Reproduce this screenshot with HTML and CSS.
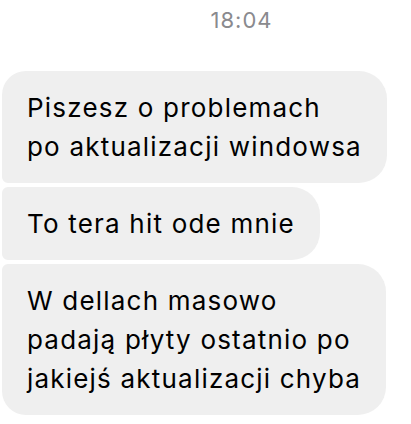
FILE: index.html
```html
<!DOCTYPE html>
<html lang="pl">
<head>
    <meta charset="UTF-8">
    <meta name="viewport" content="width=device-width, initial-scale=1.0">
    <title>Wiadomości</title>
    <link rel="stylesheet" href="styles.css">
</head>
<body>

    <div class="thread">
        <div class="time">18:04</div>

        <div class="group">
            <div class="bubble first">Piszesz o problemach<br>po aktualizacji windowsa</div>
            <div class="bubble">To tera hit ode mnie</div>
            <div class="bubble last">W dellach masowo<br>padają płyty ostatnio po<br>jakiejś aktualizacji chyba</div>
        </div>
    </div>

</body>
</html>
```

FILE: styles.css
```css
body {
    margin: 0;
    padding: 0;
    background-color: #fff;
    font-family: Inter, "Noto Sans", sans-serif;
    color: #000;
}
.thread {
    display: flex;
    flex-direction: column;
    padding: 0 2px;
}
.time {
    padding: 8px 0 0 72px;
    text-align: center;
    font-size: 22px;
    line-height: 25px;
    letter-spacing: 1px;
    color: #8a8a8e;
}
.group {
    display: flex;
    flex-direction: column;
    align-items: flex-start;
    gap: 4px;
    margin-top: 38px;
}
.bubble {
    background-color: #efefef;
    font-size: 26px;
    line-height: 39px;
    letter-spacing: 1.2px;
    padding: 17px 25px;
    border-radius: 6px 28px 28px 6px;
}
.bubble.first {
    border-top-left-radius: 24px;
}
.bubble.last {
    border-bottom-left-radius: 24px;
}
```
